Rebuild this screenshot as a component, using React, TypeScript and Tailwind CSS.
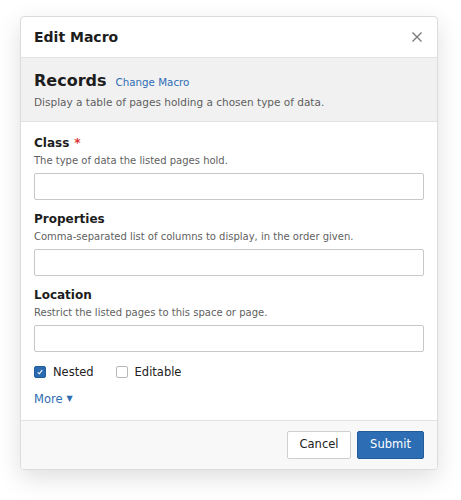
import { useState } from "react";

type Field = {
  label: string;
  hint: string;
  required?: boolean;
};

const fields: Field[] = [
  { label: "Class", hint: "The type of data the listed pages hold.", required: true },
  { label: "Properties", hint: "Comma-separated list of columns to display, in the order given." },
  { label: "Location", hint: "Restrict the listed pages to this space or page." },
];

function CheckBox({ checked, label, onToggle }: { checked: boolean; label: string; onToggle: () => void }) {
  return (
    <label className="flex items-center gap-[7px] cursor-pointer" onClick={onToggle}>
      {checked ? (
        <span className="w-[12px] h-[12px] rounded-[2px] bg-[#2d6bb1] border border-[#245c99] flex items-center justify-center">
          <svg width="8" height="8" viewBox="0 0 8 8" fill="none">
            <path d="M1.8 4.3 L3.3 5.8 L6.2 2.2" stroke="white" strokeWidth="1.1" />
          </svg>
        </span>
      ) : (
        <span className="w-[12px] h-[12px] rounded-[2px] bg-white border border-[#b8b8b8]" />
      )}
      <span className="text-[11.5px] leading-[16px] text-[#222]">{label}</span>
    </label>
  );
}

export default function App() {
  const [nested, setNested] = useState(true);
  const [editable, setEditable] = useState(false);

  return (
    <div className="min-h-[500px] bg-white pt-4 pl-5" style={{ fontFamily: '"DejaVu Sans", Verdana, sans-serif' }}>
      <div className="w-[418px] bg-white border border-[#dcdcdc] rounded-[4px] shadow-[0_8px_24px_rgba(0,0,0,0.13)] overflow-hidden">
        {/* title bar */}
        <div className="h-[41px] flex items-center justify-between pl-[13px] pr-[14px] border-b border-[#e2e2e2]">
          <h2 className="text-[14px] font-bold text-[#1d1d1d]">Edit Macro</h2>
          <button className="text-[#777] w-[12px] h-[12px] flex items-center justify-center">
            <svg width="10" height="10" viewBox="0 0 10 10">
              <path d="M0.5 0.5 L9.5 9.5 M9.5 0.5 L0.5 9.5" stroke="currentColor" strokeWidth="1.3" />
            </svg>
          </button>
        </div>

        {/* macro summary */}
        <div className="bg-[#f1f1f1] border-b border-[#e2e2e2] pl-[13px] pr-[14px] pt-[12px] pb-[12px]">
          <div className="flex items-baseline gap-[9px]">
            <span className="text-[16px] leading-[22px] font-bold text-[#1d1d1d]">Records</span>
            <a href="#" className="text-[10.3px] text-[#2f6db3]">Change Macro</a>
          </div>
          <p className="mt-[3px] text-[10.5px] leading-[14px] text-[#5f5f5f]">
            Display a table of pages holding a chosen type of data.
          </p>
        </div>

        {/* form body */}
        <div className="pl-[13px] pr-[13px] pt-[13px] pb-[13px]">
          {fields.map((f, i) => (
            <div key={f.label} className={i > 0 ? "mt-[11px]" : ""}>
              <div className="text-[12px] leading-[16px] font-bold text-[#1d1d1d]">
                {f.label}
                {f.required && <span className="text-[#d33] ml-[5px]">*</span>}
              </div>
              <div className="mt-[3px] text-[10px] leading-[14px] text-[#5f5f5f]">{f.hint}</div>
              <input
                type="text"
                className="mt-[5px] block w-full h-[27px] border border-[#c8c8c8] rounded-[2px] bg-white px-2 text-[12px] outline-none"
              />
            </div>
          ))}

          <div className="mt-[12px] flex items-center gap-[22px]">
            <CheckBox checked={nested} label="Nested" onToggle={() => setNested(!nested)} />
            <CheckBox checked={editable} label="Editable" onToggle={() => setEditable(!editable)} />
          </div>

          <a href="#" className="mt-[11px] flex items-center gap-[4px] text-[11.5px] leading-[16px] text-[#2f6db3]">
            More <span className="text-[8px]">▼</span>
          </a>
        </div>

        {/* actions */}
        <div className="bg-[#f8f8f8] border-t border-[#e2e2e2] flex justify-end gap-[6px] pr-[13px] py-[10px]">
          <button className="h-[28px] w-[64px] bg-white border border-[#cfcfcf] rounded-[2px] text-[11.5px] text-[#222]">
            Cancel
          </button>
          <button className="h-[28px] w-[67px] bg-[#2d6db3] border border-[#245c99] rounded-[2px] text-[11.5px] text-white">
            Submit
          </button>
        </div>
      </div>
    </div>
  );
}
